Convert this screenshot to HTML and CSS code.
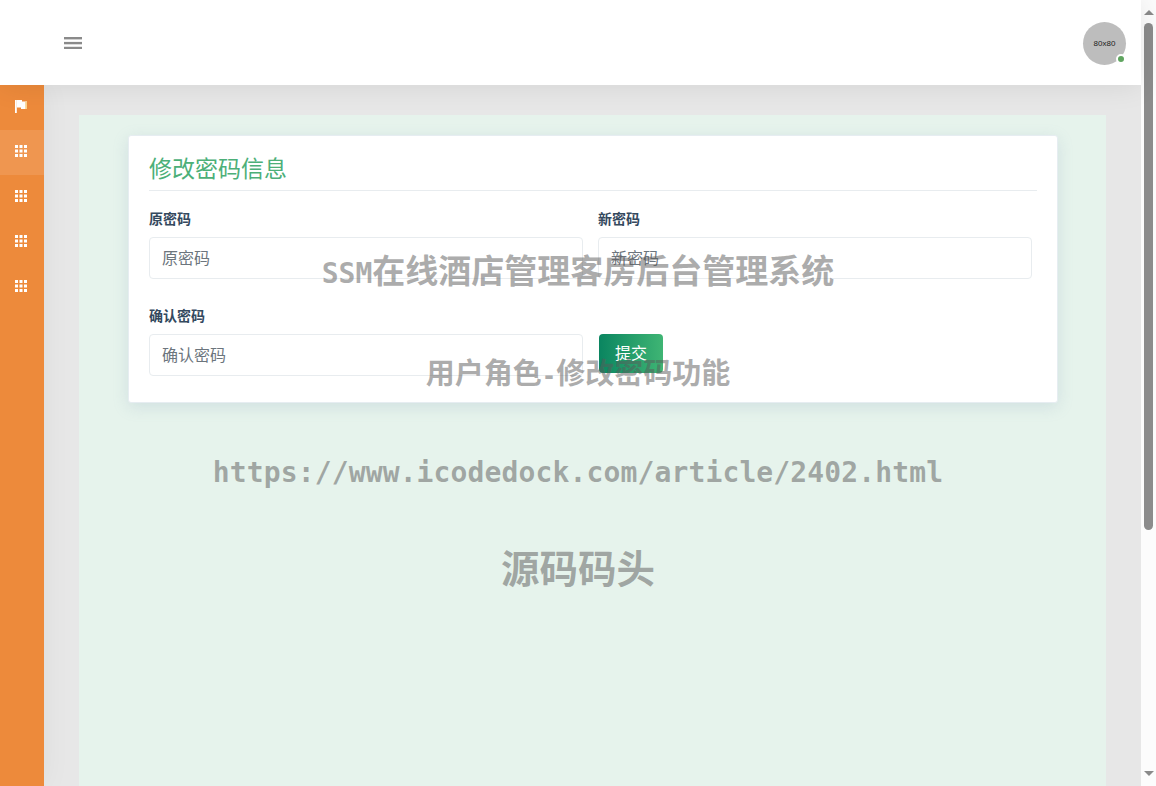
FILE: index.html
```html
<!DOCTYPE html>
<html lang="en">
<head>
  <meta charset="UTF-8">
  <title>修改密码信息</title>
  <link rel="stylesheet" href="styles.css">
</head>
<body>

  <div class="window">
    <div class="page">
      <header class="topbar">
        <svg class="menu-icon" viewBox="0 0 18 12.2" width="18" height="12.2">
          <rect x="0" y="0" width="18" height="2.4" />
          <rect x="0" y="4.9" width="18" height="2.4" />
          <rect x="0" y="9.8" width="18" height="2.4" />
        </svg>
        <div class="avatar">80x80<span class="online-dot"></span></div>
      </header>

      <div class="main">
        <nav class="sidebar">
          <a class="side-item">
            <svg viewBox="0 0 12 13" width="12" height="13">
              <rect x="0" y="0" width="1.8" height="13" fill="#fff" />
              <path d="M1.8 0H7V1.5H12V9H6V7.5H1.8Z" fill="#fff" />
              <rect x="10.2" y="1.5" width="1.8" height="7.5" fill="#fbd38d" />
            </svg>
          </a>
          <a class="side-item active">
            <svg viewBox="0 0 12 12" width="12" height="12"><use href="#grid" /></svg>
          </a>
          <a class="side-item">
            <svg viewBox="0 0 12 12" width="12" height="12"><use href="#grid" /></svg>
          </a>
          <a class="side-item">
            <svg viewBox="0 0 12 12" width="12" height="12"><use href="#grid" /></svg>
          </a>
          <a class="side-item">
            <svg viewBox="0 0 12 12" width="12" height="12"><use href="#grid" /></svg>
          </a>
        </nav>

        <div class="content">
          <div class="panel">
            <div class="card">
              <h3 class="card-title">修改密码信息</h3>
              <form class="pwd-form">
                <div class="field">
                  <label>原密码</label>
                  <input type="password" placeholder="原密码">
                </div>
                <div class="field">
                  <label>新密码</label>
                  <input type="password" placeholder="新密码">
                </div>
                <div class="field">
                  <label>确认密码</label>
                  <input type="password" placeholder="确认密码">
                </div>
                <div class="field-btn">
                  <button type="button" class="submit-btn">提交</button>
                </div>
              </form>
            </div>
          </div>
        </div>
      </div>
    </div>

    <div class="scrollbar">
      <span class="arrow-up"></span>
      <div class="scroll-track"><div class="scroll-thumb"></div></div>
      <span class="arrow-down"></span>
    </div>

    <div class="wm wm-1"><span class="wm-latin">SSM</span>在线酒店管理客房后台管理系统</div>
    <div class="wm wm-2">用户角色<span class="wm-latin-sm">-</span>修改密码功能</div>
    <div class="wm wm-3">https://www.icodedock.com/article/2402.html</div>
    <div class="wm wm-4">源码码头</div>
  </div>

  <svg width="0" height="0" class="defs">
    <symbol id="grid" viewBox="0 0 12 12">
      <g fill="#fff">
        <rect x="0" y="0" width="3" height="3" /><rect x="4.5" y="0" width="3" height="3" /><rect x="9" y="0" width="3" height="3" />
        <rect x="0" y="4.5" width="3" height="3" /><rect x="4.5" y="4.5" width="3" height="3" /><rect x="9" y="4.5" width="3" height="3" />
        <rect x="0" y="9" width="3" height="3" /><rect x="4.5" y="9" width="3" height="3" /><rect x="9" y="9" width="3" height="3" />
      </g>
    </symbol>
  </svg>

</body>
</html>
```

FILE: styles.css
```css
* {
  box-sizing: border-box;
}
html, body {
  margin: 0;
  height: 100%;
  overflow: hidden;
}
body {
  font-family: "Liberation Sans", "Noto Sans CJK SC", sans-serif;
  background: #fff;
}
.defs {
  position: absolute;
}
.window {
  position: relative;
  display: flex;
  width: 1156px;
  height: 786px;
  overflow: hidden;
}
.page {
  display: flex;
  flex-direction: column;
  width: 1141px;
  height: 786px;
}
.topbar {
  display: flex;
  justify-content: space-between;
  align-items: center;
  height: 85px;
  padding: 0 15px 0 64px;
  background: #fff;
  position: relative;
  z-index: 2;
  box-shadow: 0 0 30px rgba(0,0,0,0.09);
}
.menu-icon {
  fill: #8a8a8a;
  display: block;
  margin-top: 1px;
}
.avatar {
  position: relative;
  width: 43px;
  height: 43px;
  margin-top: 2px;
  border-radius: 50%;
  background: #bdbdbd;
  color: #222;
  font-size: 8px;
  line-height: 43px;
  text-align: center;
}
.online-dot {
  position: absolute;
  right: 0;
  bottom: 1px;
  width: 10px;
  height: 10px;
  border: 2px solid #fff;
  border-radius: 50%;
  background: #5fa55f;
}
.main {
  display: flex;
  flex: 1;
}
.sidebar {
  width: 44px;
  background: #ed8a3b;
  flex-shrink: 0;
  position: relative;
  z-index: 1;
  box-shadow: 0 0 30px rgba(0,0,0,0.05);
}
.side-item {
  display: flex;
  justify-content: center;
  align-items: center;
  height: 45px;
  padding: 0 2px 3px 0;
}
.side-item svg {
  display: block;
}
.side-item.active {
  background: #ef9650;
}
.content {
  flex: 1;
  padding: 30px 35px 0;
  background: #e7e7e7;
}
.panel {
  height: 100%;
  padding: 20px 48px 0 49px;
  background: #e6f3ec;
}
.card {
  height: 268px;
  padding: 20px 20px 0;
  background: #fff;
  border: 1px solid #e6edf1;
  border-radius: 3px;
  box-shadow: 0 4px 16px rgba(120,150,180,0.2);
}
.card-title {
  margin: 0;
  height: 35px;
  font-size: 23px;
  font-weight: 400;
  line-height: 27px;
  color: #4caf78;
  border-bottom: 1px solid #e8ecef;
}
.pwd-form {
  display: grid;
  grid-template-columns: 434px 434px;
  column-gap: 15px;
  row-gap: 28px;
  margin-top: 19px;
}
.field label {
  display: block;
  height: 27px;
  font-size: 14px;
  font-weight: 700;
  line-height: 19px;
  color: #34495e;
}
.field input {
  display: block;
  width: 100%;
  height: 42px;
  padding: 2px 12px 0;
  font-family: inherit;
  font-size: 16px;
  color: #495057;
  background: #fff;
  border: 1px solid #e8ecef;
  border-radius: 4px;
  outline: none;
}
.field input::placeholder {
  color: #6c757d;
  opacity: 1;
}
.field-btn {
  padding-top: 27px;
  padding-left: 1px;
}
.submit-btn {
  display: block;
  width: 64px;
  height: 39px;
  padding: 0 0 4px;
  font-family: inherit;
  font-size: 16px;
  color: #fff;
  background: linear-gradient(90deg, #0a8560, #3fb574);
  border: none;
  border-radius: 4px;
}
.scrollbar {
  display: flex;
  flex-direction: column;
  align-items: center;
  width: 15px;
  height: 786px;
  background: #fcfcfc;
}
.arrow-up, .arrow-down {
  display: block;
  width: 0;
  height: 0;
  border-left: 5px solid transparent;
  border-right: 5px solid transparent;
}
.arrow-up {
  margin-top: 10px;
  border-bottom: 5px solid #8a8a8a;
}
.arrow-down {
  margin-bottom: 10px;
  border-top: 5px solid #8a8a8a;
}
.scroll-track {
  flex: 1;
  width: 100%;
  padding-top: 8px;
}
.scroll-thumb {
  width: 9px;
  height: 507px;
  margin: 0 auto;
  border-radius: 5px;
  background: #8c8c8c;
}
.wm {
  position: absolute;
  left: 0;
  width: 1156px;
  text-align: center;
  font-family: "DejaVu Sans Mono", "Noto Sans CJK SC", monospace;
  font-weight: 700;
  white-space: nowrap;
  color: rgba(90,90,90,0.5);
}
.wm-1 {
  top: 251px;
  font-size: 33px;
  line-height: 42px;
}
.wm-latin {
  font-size: 28px;
}
.wm-2 {
  top: 355px;
  font-size: 29px;
  line-height: 38px;
}
.wm-latin-sm {
  font-size: 24px;
}
.wm-3 {
  top: 453px;
  font-size: 28px;
  line-height: 40px;
  letter-spacing: 0.13px;
}
.wm-4 {
  top: 545px;
  font-size: 38.5px;
  line-height: 50px;
}
```
